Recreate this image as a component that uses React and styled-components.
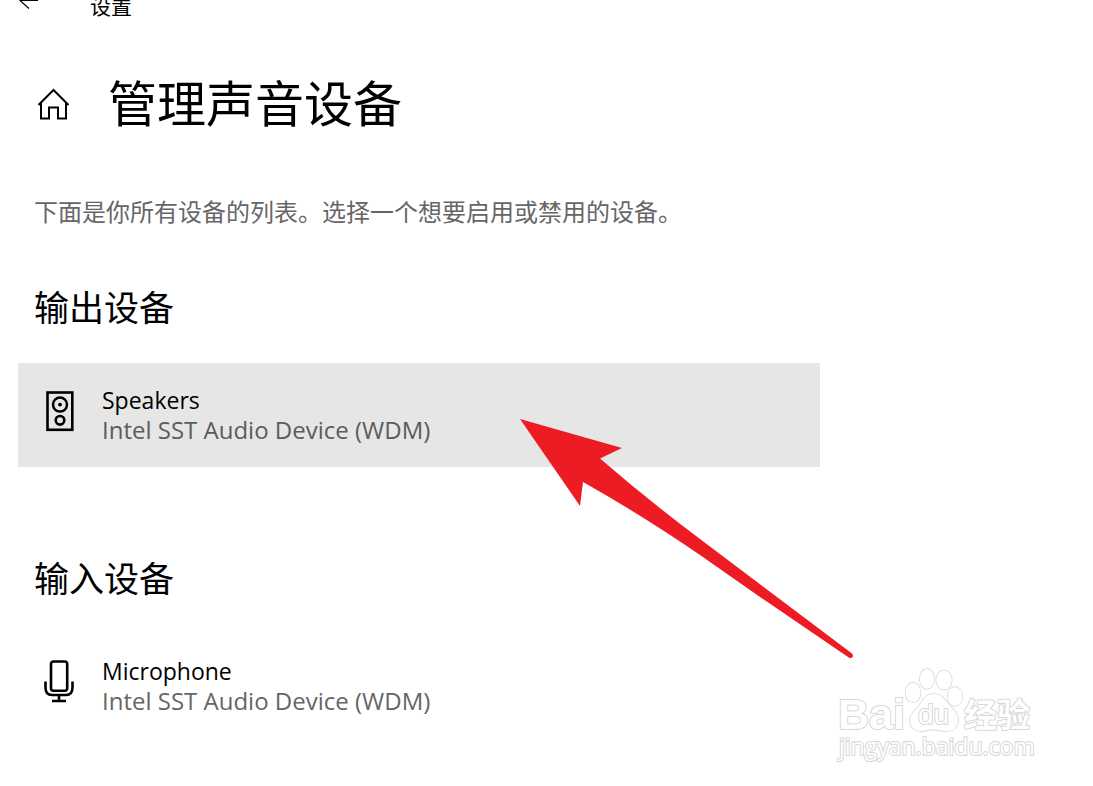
import React from "react";
import styled, { createGlobalStyle } from "styled-components";

const GlobalStyle = createGlobalStyle`
  * {
    box-sizing: border-box;
  }
  body {
    margin: 0;
    background-color: white;
    color: black;
    font-family: "Open Sans", "Noto Sans CJK SC", sans-serif;
  }
  button {
    border: none;
    padding: 0;
    background: none;
    color: inherit;
    font: inherit;
    text-align: left;
  }
  svg {
    display: block;
    flex-shrink: 0;
  }
`;

const Page = styled.div`
  position: relative;
  min-height: 100vh;
  padding: 0 18px;
  overflow: hidden;
`;

/* the title bar is scrolled half out of the window */
const TitleBar = styled.header`
  display: flex;
  align-items: flex-end;
  gap: 52px;
  height: 36px;
  margin-top: -18px;
`;

const BackButton = styled.button`
  padding-bottom: 8px;
`;

const AppName = styled.span`
  font-family: "Noto Sans CJK SC", sans-serif;
  font-weight: 400;
  font-size: 21px;
  line-height: 26px;
`;

const Heading = styled.div`
  display: flex;
  align-items: center;
  gap: 37px;
  margin-top: 49px;
  padding-left: 19px;
`;

const Title = styled.h1`
  margin: 0;
  font-weight: 400;
  font-size: 49px;
  line-height: 72px;
`;

const Intro = styled.p`
  margin: 55px 0 0;
  padding-left: 16px;
  color: #666;
  font-weight: 400;
  font-size: 24px;
  line-height: 36px;
`;

const Section = styled.section`
  margin-top: ${(props) => (props.$first ? "52px" : "86px")};
`;

const SectionTitle = styled.h2`
  margin: 0 0 29px;
  padding-left: 16px;
  font-weight: 400;
  font-size: 35px;
  line-height: 52px;
`;

const Device = styled.button`
  display: flex;
  align-items: flex-start;
  gap: 26px;
  width: 100%;
  max-width: 802px;
  height: 104px;
  padding: 23px 26px;
  background-color: ${(props) => (props.$active ? "#e6e6e6" : "transparent")};
`;

const DeviceText = styled.span`
  display: flex;
  flex-direction: column;
  font-size: 24px;
  line-height: 29px;
`;

const DeviceName = styled.span`
  font-size: 23px;
`;

const DeviceDetail = styled.span`
  color: ${(props) => (props.$active ? "#5c5c5c" : "#666")};
`;

const Pointer = styled.svg`
  position: absolute;
  left: 520px;
  top: 419px;
  pointer-events: none;
`;

const Watermark = styled.svg`
  position: absolute;
  left: 832px;
  top: 662px;
  font-family: "Liberation Sans", "Noto Sans CJK SC", sans-serif;
`;

const BackIcon = () => (
  <svg width="20" height="20" viewBox="0 0 20 20" fill="none" stroke="black" strokeWidth="1.2">
    <path d="M20 10.5H2.5M11 1.5L2 10.5L11 18.5" />
  </svg>
);

const HomeIcon = () => (
  <svg width="34" height="34" viewBox="0 0 34 34" fill="none" stroke="black" strokeWidth="2">
    <path d="M1.5 19L16.5 4L31.5 19M4 16.5V32.5H12V21.5H21V32.5H29V16.5" />
  </svg>
);

const SpeakerIcon = () => (
  <svg width="32" height="50" viewBox="0 0 32 50" fill="none" stroke="black">
    <rect x="3.5" y="6.5" width="24.8" height="37.3" strokeWidth="2.6" />
    <circle cx="16" cy="18.6" r="7" strokeWidth="2.5" />
    <circle cx="16" cy="18.6" r="1.9" fill="black" stroke="none" />
    <circle cx="16" cy="34.3" r="4.3" strokeWidth="2.6" />
  </svg>
);

const MicrophoneIcon = () => (
  <svg width="32" height="50" viewBox="0 0 32 50" fill="none" stroke="black" strokeWidth="2.6">
    <rect x="7" y="4.5" width="16.2" height="29.2" rx="2.5" />
    <path d="M1.5 24.5V30.5Q1.5 38 8 38H22Q28.5 38 28.5 30.5V24.5M15 38V43.5M8 44H22" />
  </svg>
);

const devices = [
  { group: "输出设备", name: "Speakers", detail: "Intel SST Audio Device (WDM)", Icon: SpeakerIcon, active: true },
  { group: "输入设备", name: "Microphone", detail: "Intel SST Audio Device (WDM)", Icon: MicrophoneIcon, active: false },
];

const BaiduMark = () => (
  <Watermark width="212" height="108" fill="white" stroke="#d6d6d6" strokeWidth="2" paintOrder="stroke" strokeLinejoin="round">
    <g strokeWidth="1.5">
      <ellipse cx="81" cy="30.5" rx="7.5" ry="9.8" />
      <ellipse cx="95" cy="17" rx="7.2" ry="10" />
      <ellipse cx="112" cy="18" rx="7.8" ry="9.6" />
      <ellipse cx="123" cy="34.5" rx="7.5" ry="9.4" />
      <path d="M102 32C110 32 113 38 118 44C123 50 127 52 126 60C125 68 118 70 111 69C104 67 99 67 92 69C84 70 77 66 78 57C79 50 85 48 89 41C92 35 96 32 102 32Z" />
    </g>
    <text x="6" y="67" fontSize="43" fontWeight="700">Bai</text>
    <text x="86" y="62" fontSize="28">du</text>
    <text x="132" y="65" fontSize="33" fontWeight="700">经验</text>
    <text x="7" y="93" fontSize="23" fontFamily="Open Sans, sans-serif">jingyan.baidu.com</text>
  </Watermark>
);

const App = () => {
  return (
    <>
      <GlobalStyle />
      <Page>
        <TitleBar>
          <BackButton type="button" aria-label="返回">
            <BackIcon />
          </BackButton>
          <AppName>设置</AppName>
        </TitleBar>
        <main>
          <Heading>
            <button type="button" aria-label="主页">
              <HomeIcon />
            </button>
            <Title>管理声音设备</Title>
          </Heading>
          <Intro>下面是你所有设备的列表。选择一个想要启用或禁用的设备。</Intro>
          {devices.map(({ group, name, detail, Icon, active }, index) => (
            <Section key={group} $first={index === 0}>
              <SectionTitle>{group}</SectionTitle>
              <Device type="button" $active={active}>
                <Icon />
                <DeviceText>
                  <DeviceName>{name}</DeviceName>
                  <DeviceDetail $active={active}>{detail}</DeviceDetail>
                </DeviceText>
              </Device>
            </Section>
          ))}
        </main>
        <Pointer width="334" height="240" viewBox="520 419 334 240" aria-hidden="true">
          <path
            fill="#ed1c24"
            d="M520 419L622 448L600 458.5Q648 500 700 539L852 653.5Q854 656 852 657.5Q850 659 848 657L760 597L700 555Q640 514 583 482L580 506Z"
          />
        </Pointer>
        <BaiduMark />
      </Page>
    </>
  );
};

export default App;
